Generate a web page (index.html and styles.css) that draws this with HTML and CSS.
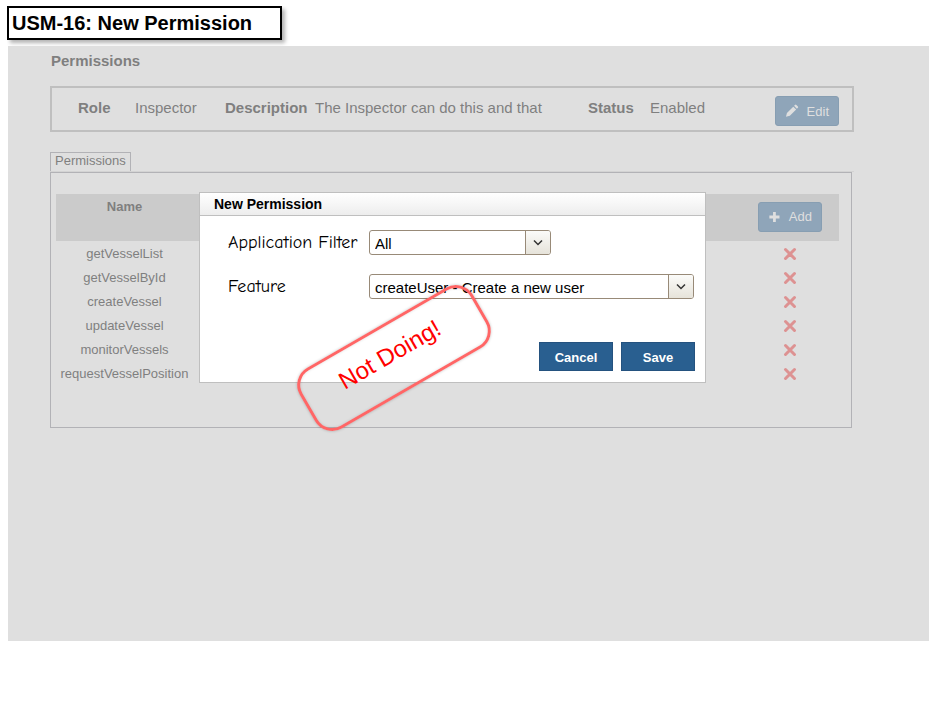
FILE: index.html
```
<!DOCTYPE html>
<html lang="en">
<head>
<meta charset="utf-8">
<title>USM-16: New Permission</title>
<link rel="stylesheet" href="styles.css">
</head>
<body>
<h1 class="page-title">USM-16: New Permission</h1>
<main class="screen">
  <h2 class="heading">Permissions</h2>
  <section class="summary">
    <dl class="facts">
      <div class="fact role"><dt>Role</dt><dd>Inspector</dd></div>
      <div class="fact description"><dt>Description</dt><dd>The Inspector can do this and that</dd></div>
      <div class="fact status"><dt>Status</dt><dd>Enabled</dd></div>
    </dl>
    <button class="action" type="button">
      <svg width="14" height="14" viewBox="0 0 14 14" aria-hidden="true"><path d="M1 13l1-4 6.500-6.500 3 3L5 12zM9.300 1.700l1-1q.7-.6 1.400 0l1.600 1.600q.6.700 0 1.400l-1 1z" fill="#dfdfdf"/></svg>
      Edit
    </button>
  </section>
  <div class="tabs"><button class="tab" type="button">Permissions</button></div>
  <section class="panel">
    <table class="grid">
      <thead>
        <tr>
          <th class="name">Name</th>
          <th></th>
          <th class="tools">
            <button class="action" type="button">
              <svg width="14" height="14" viewBox="0 0 14 14" aria-hidden="true"><path d="M5.500 1.500h3v4h4v3h-4v4h-3v-4h-4v-3h4z" fill="#dfdfdf"/></svg>
              Add
            </button>
          </th>
        </tr>
      </thead>
      <tbody>
        <tr><td>getVesselList</td><td></td><td><button class="remove" type="button" aria-label="Remove getVesselList"><svg width="14" height="14" viewBox="0 0 14 14"><path d="M2.500 2.500l9 9M11.500 2.500l-9 9"/></svg></button></td></tr>
        <tr><td>getVesselById</td><td></td><td><button class="remove" type="button" aria-label="Remove getVesselById"><svg width="14" height="14" viewBox="0 0 14 14"><path d="M2.500 2.500l9 9M11.500 2.500l-9 9"/></svg></button></td></tr>
        <tr><td>createVessel</td><td></td><td><button class="remove" type="button" aria-label="Remove createVessel"><svg width="14" height="14" viewBox="0 0 14 14"><path d="M2.500 2.500l9 9M11.500 2.500l-9 9"/></svg></button></td></tr>
        <tr><td>updateVessel</td><td></td><td><button class="remove" type="button" aria-label="Remove updateVessel"><svg width="14" height="14" viewBox="0 0 14 14"><path d="M2.500 2.500l9 9M11.500 2.500l-9 9"/></svg></button></td></tr>
        <tr><td>monitorVessels</td><td></td><td><button class="remove" type="button" aria-label="Remove monitorVessels"><svg width="14" height="14" viewBox="0 0 14 14"><path d="M2.500 2.500l9 9M11.500 2.500l-9 9"/></svg></button></td></tr>
        <tr><td>requestVesselPosition</td><td></td><td><button class="remove" type="button" aria-label="Remove requestVesselPosition"><svg width="14" height="14" viewBox="0 0 14 14"><path d="M2.500 2.500l9 9M11.500 2.500l-9 9"/></svg></button></td></tr>
      </tbody>
    </table>
  </section>

  <form class="dialog" role="dialog" aria-labelledby="dialog-title">
    <h2 class="dialog-title" id="dialog-title">New Permission</h2>
    <div class="fields">
      <label for="filter">Application Filter</label>
      <div class="combo short">
        <select id="filter"><option>All</option></select>
        <span class="arrow"><svg width="12" height="8" viewBox="0 0 12 8" aria-hidden="true"><path d="M2 1.500l4 4 4-4"/></svg></span>
      </div>
      <label for="feature">Feature</label>
      <div class="combo">
        <select id="feature"><option>createUser - Create a new user</option></select>
        <span class="arrow"><svg width="12" height="8" viewBox="0 0 12 8" aria-hidden="true"><path d="M2 1.500l4 4 4-4"/></svg></span>
      </div>
    </div>
    <div class="buttons">
      <button class="primary" type="button">Cancel</button>
      <button class="primary" type="button">Save</button>
    </div>
  </form>
  <div class="stamp">Not Doing!</div>
</main>
</body>
</html>
```
FILE: styles.css
```
* { box-sizing: border-box; }
body {
  margin: 6px 16px 16px 7px;
  background: #fff;
  font-family: "Liberation Sans", Arial, sans-serif;
  font-size: 13px;
}
h1, h2, dl, dd { margin: 0; }
button, select { font: inherit; margin: 0; }

.page-title {
  width: max-content;
  padding: 3px 28px 3px 3px;
  border: 2px solid #000;
  background: #fff;
  box-shadow: 3px 3px 4px rgba(0, 0, 0, .3);
  font-size: 20px;
  line-height: 24px;
}

.screen {
  position: relative;
  min-height: 595px;
  margin: 6px 0 0 1px;
  padding: 5px 75px 0 42px;
  background: #dfdfdf;
  color: #7f7f7f;
}
.heading {
  padding-left: 1px;
  font-size: 15px;
  line-height: 20px;
}

.summary {
  display: flex;
  justify-content: space-between;
  height: 46px;
  margin-top: 15px;
  padding: 8px 13px 0 26px;
  border: 2px solid #bfbfbf;
}
.facts { display: flex; font-size: 15px; line-height: 24px; }
.fact { display: flex; }
.fact dt { font-weight: bold; }
.role { width: 147px; }
.role dt { width: 57px; }
.description { width: 363px; }
.description dt { width: 90px; }
.status dt { width: 62px; }

.action {
  display: flex;
  align-items: center;
  gap: 8px;
  width: 64px;
  height: 30px;
  padding: 0 9px;
  border: 1px solid #879eb2;
  border-radius: 3px;
  background: #8fa5b9;
  color: #dfdfdf;
}

.tabs {
  display: flex;
  margin-top: 20px;
  border-bottom: 1px solid #d3d3d3;
}
.tab {
  height: 19px;
  padding: 0 4px 2px;
  border: 1px solid #b2b2b6;
  border-bottom: 0;
  background: #dfdfdf;
  color: #7f7f7f;
  line-height: 16px;
}
.panel {
  min-height: 256px;
  margin-right: 2px;
  padding: 21px 12px 0 5px;
  border: 1px solid #b2b2b6;
}
.grid {
  width: 100%;
  border-collapse: collapse;
  table-layout: fixed;
  text-align: center;
}
.grid th {
  height: 47px;
  padding: 5px 0 0;
  background: #cbcbcb;
  vertical-align: top;
  line-height: 16px;
}
.grid .name { width: 137px; }
.grid .tools { width: 98px; padding-top: 8px; }
.tools .action { margin: 0 auto; font-weight: normal; }
.grid td { height: 24px; padding: 1px 0 0; white-space: nowrap; }
.remove {
  display: block;
  margin: 0 auto;
  padding: 0;
  border: 0;
  background: none;
}
.remove svg { display: block; }
.remove path {
  fill: none;
  stroke: #dd9292;
  stroke-width: 3;
  stroke-linecap: round;
}

.dialog {
  position: absolute;
  left: 191px;
  top: 146px;
  width: 507px;
  border: 1px solid #bfbfbf;
  background: #fff;
  color: #000;
}
.dialog-title {
  padding: 1px 0 0 14px;
  border-bottom: 1px solid #bfbfbf;
  background: linear-gradient(#fff, #ededed);
  font-size: 14px;
  line-height: 21px;
}
.fields {
  display: grid;
  grid-template-columns: 141px 1fr;
  row-gap: 19px;
  align-items: center;
  padding: 14px 11px 0 28px;
}
.fields label {
  font-family: "Comic Sans MS", "Comic Neue", Lato, sans-serif;
  font-size: 18px;
  line-height: 25px;
}
.combo {
  display: grid;
  grid-template-columns: 1fr 25px;
  height: 25px;
  border: 1px solid #988a78;
  border-radius: 3px;
  background: #fff;
  overflow: hidden;
}
.short { width: 182px; }
.combo select {
  grid-area: 1 / 1 / 2 / 3;
  appearance: none;
  border: 0;
  padding: 1px 28px 0 5px;
  background: none;
  color: #000;
  font-size: 15px;
}
.arrow {
  display: grid;
  grid-area: 1 / 2;
  place-items: center;
  border-left: 1px solid #988a78;
  background: linear-gradient(#fbfbf9, #e6e3da);
  pointer-events: none;
}
.arrow path { fill: none; stroke: #333; stroke-width: 1.5; }
.buttons {
  display: flex;
  justify-content: flex-end;
  gap: 8px;
  padding: 43px 10px 11px;
}
.primary {
  width: 74px;
  height: 29px;
  padding: 2px 0 0;
  border: 1px solid #24527f;
  background: #295f90;
  color: #fff;
  font-weight: bold;
}

.stamp {
  position: absolute;
  left: 286px;
  top: 277px;
  width: 200px;
  height: 70px;
  padding-right: 4px;
  border: 3px solid #ff6666;
  border-radius: 20px;
  box-shadow: 0 0 3px rgba(0, 0, 0, .25), inset 0 0 3px rgba(0, 0, 0, .15);
  color: #f00;
  font-size: 24px;
  line-height: 54px;
  text-align: center;
  transform: rotate(-30deg);
}
```
